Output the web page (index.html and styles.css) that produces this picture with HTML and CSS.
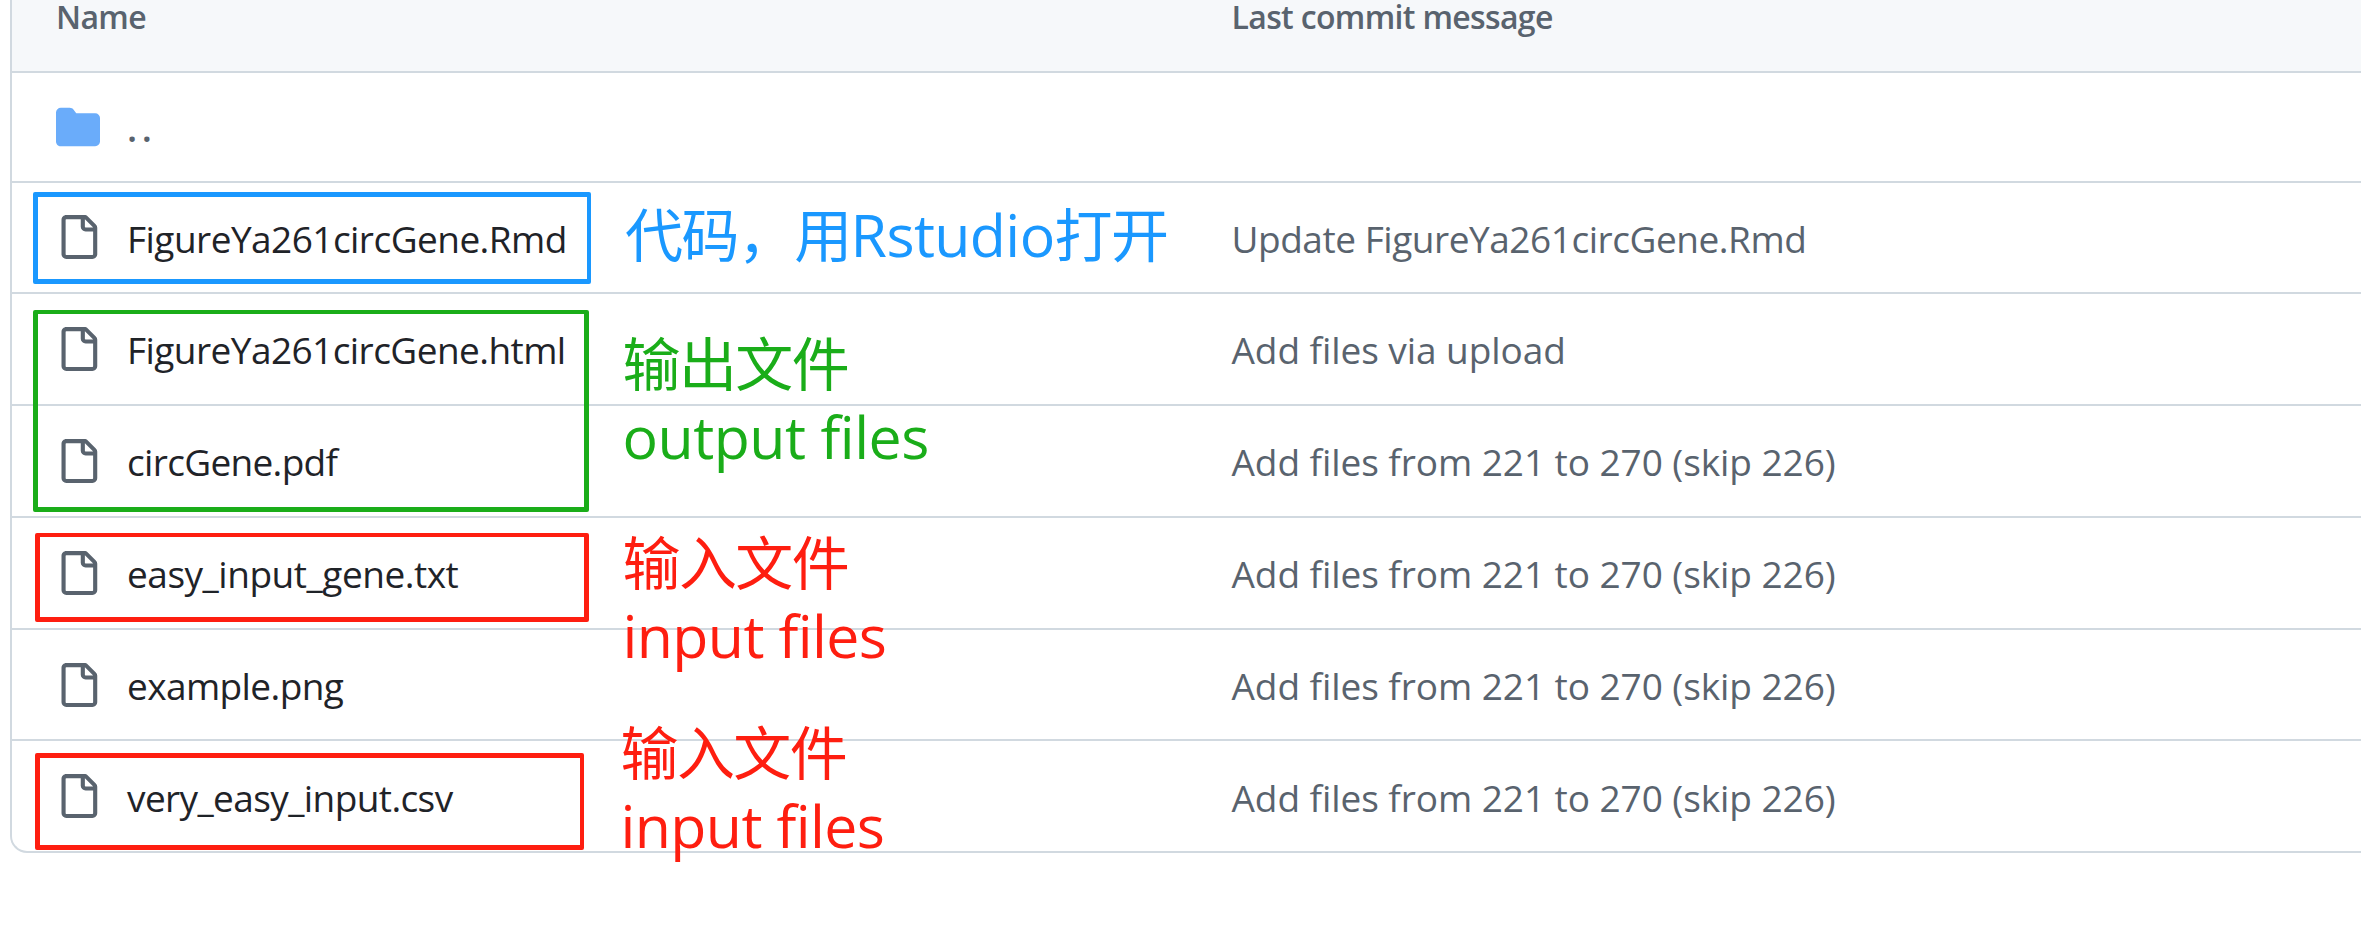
FILE: index.html
```html
<!DOCTYPE html>
<html lang="zh-CN">
<head>
<meta charset="utf-8">
<title>FigureYa261circGene</title>
<link rel="stylesheet" href="styles.css">
</head>
<body>
<svg class="defs" aria-hidden="true">
  <symbol id="file" viewBox="0 0 16 16"><path d="M2 1.75C2 .784 2.784 0 3.75 0h6.586c.464 0 .909.184 1.237.513l2.914 2.914c.329.328.513.773.513 1.237v9.586A1.75 1.75 0 0 1 13.25 16h-9.5A1.75 1.75 0 0 1 2 14.25Zm1.75-.25a.25.25 0 0 0-.25.25v12.5c0 .138.112.25.25.25h9.5a.25.25 0 0 0 .25-.25V6h-2.75A1.75 1.75 0 0 1 9 4.25V1.5Zm6.75.062V4.25c0 .138.112.25.25.25h2.688l-.011-.013-2.914-2.914-.013-.011Z"/></symbol>
  <symbol id="folder" viewBox="0 0 16 16"><path d="M1.75 1A1.75 1.75 0 0 0 0 2.75v10.5C0 14.216.784 15 1.75 15h12.5A1.75 1.75 0 0 0 16 13.25v-8.5A1.75 1.75 0 0 0 14.25 3H7.5a.25.25 0 0 1-.2-.1l-.9-1.2C6.07 1.26 5.55 1 5 1H1.75Z"/></symbol>
</svg>
<main class="files">
  <div class="row head"><div class="name">Name</div><div class="msg">Last commit message</div></div>
  <div class="row up"><div class="name"><svg class="icon folder"><use href="#folder"/></svg><span class="dots">..</span></div></div>
  <div class="row r1"><div class="name"><svg class="icon"><use href="#file"/></svg><span class="rmd">FigureYa261circGene.Rmd</span></div><div class="msg update">Update FigureYa261circGene.Rmd</div></div>
  <div class="row r2"><div class="name"><svg class="icon"><use href="#file"/></svg><span class="html">FigureYa261circGene.html</span></div><div class="msg">Add files via upload</div></div>
  <div class="row r3"><div class="name"><svg class="icon"><use href="#file"/></svg><span class="pdf">circGene.pdf</span></div><div class="msg">Add files from 221 to 270 (skip 226)</div></div>
  <div class="row r4"><div class="name"><svg class="icon"><use href="#file"/></svg><span class="txt">easy_input_gene.txt</span></div><div class="msg">Add files from 221 to 270 (skip 226)</div></div>
  <div class="row r5"><div class="name"><svg class="icon"><use href="#file"/></svg><span class="png">example.png</span></div><div class="msg">Add files from 221 to 270 (skip 226)</div></div>
  <div class="row r6"><div class="name"><svg class="icon"><use href="#file"/></svg><span class="csv">very_easy_input.csv</span></div><div class="msg">Add files from 221 to 270 (skip 226)</div></div>
</main>

<div class="mark mark-code"></div>
<div class="mark mark-output"></div>
<div class="mark mark-input"></div>
<div class="mark mark-input2"></div>

<div class="note note-code">代码，用<span class="latin">Rstudio</span>打开</div>
<div class="note note-output"><div>输出文件</div><div class="latin out">output files</div></div>
<div class="note note-input"><div>输入文件</div><div class="latin">input files</div></div>
<div class="note note-input2"><div>输入文件</div><div class="latin">input files</div></div>
</body>
</html>
```
FILE: styles.css
```css
* { box-sizing: border-box; }
body {
  margin: 0;
  height: 934px;
  overflow: hidden;
  position: relative;
  background: #fff;
  font-family: "Open Sans", "Noto Sans CJK SC", sans-serif;
  color: #1f2328;
}
.defs { position: absolute; width: 0; height: 0; }

.files {
  margin-left: 10px;
  border: solid #d1d9e0;
  border-width: 0 0 2px 2px;
  border-radius: 0 0 0 17px;
}
.row {
  display: grid;
  grid-template-columns: 1175.5px 1fr;
  align-items: start;
  height: 112px;
  padding-left: 44px;
  border-bottom: 2px solid #d1d9e0;
  font-size: 37px;
  line-height: 50px;
  white-space: nowrap;
}
.head {
  height: 73px;
  padding-left: 44px;
  background: #f6f8fa;
  font-size: 32px;
  font-weight: 600;
  line-height: 33px;
  letter-spacing: -0.66px;
  color: #59636e;
}
.up { height: 110px; }
.r1, .r5 { height: 111px; }
.r6 { height: 110px; border-bottom: 0; }

.name { display: flex; align-items: flex-start; gap: 27px; }
.name span, .msg { margin-top: 31px; }
.msg { color: #59636e; letter-spacing: -0.06px; }
.head .msg { margin-top: 0; letter-spacing: -0.66px; }
.icon { width: 44px; height: 44px; margin-top: 33px; fill: #59636e; }
.r1 .icon, .folder { margin-top: 32px; }
.up .folder { fill: #6aacfa; }

.name .dots { margin-top: 30px; font-weight: 600; letter-spacing: 4.5px; color: #59636e; }
.rmd { letter-spacing: -0.54px; }
.html { letter-spacing: -0.56px; }
.pdf { letter-spacing: -0.68px; }
.txt { letter-spacing: -0.47px; }
.png, .csv { letter-spacing: -0.6px; }
.row .update { letter-spacing: -0.46px; }
.r6 .name span, .r6 .msg { margin-top: 32px; }

.mark { position: absolute; border: 5px solid; border-radius: 2px; }
.mark-code { left: 33px; top: 192px; width: 558px; height: 92px; border-right-width: 4px; color: #1a98ff; }
.mark-output { left: 33px; top: 310px; width: 556px; height: 202px; border-top-width: 4px; color: #1aad19; }
.mark-input { left: 35px; top: 533px; width: 554px; height: 89px; border-top-width: 4px; color: #fe1e10; }
.mark-input2 { left: 35px; top: 753px; width: 549px; height: 97px; border-right-width: 4px; color: #fe1e10; }

.note { position: absolute; font-size: 58px; line-height: 73px; letter-spacing: -1.6px; white-space: nowrap; }
.latin { font-size: 59px; letter-spacing: -0.62px; }
.out { letter-spacing: -0.49px; }
.note-code { left: 625px; top: 198px; color: #1a98ff; }
.note-output { left: 622.5px; top: 327px; color: #1aad19; }
.note-input { left: 622.5px; top: 526px; color: #fe1e10; }
.note-input2 { left: 620.5px; top: 716px; color: #fe1e10; }
```
